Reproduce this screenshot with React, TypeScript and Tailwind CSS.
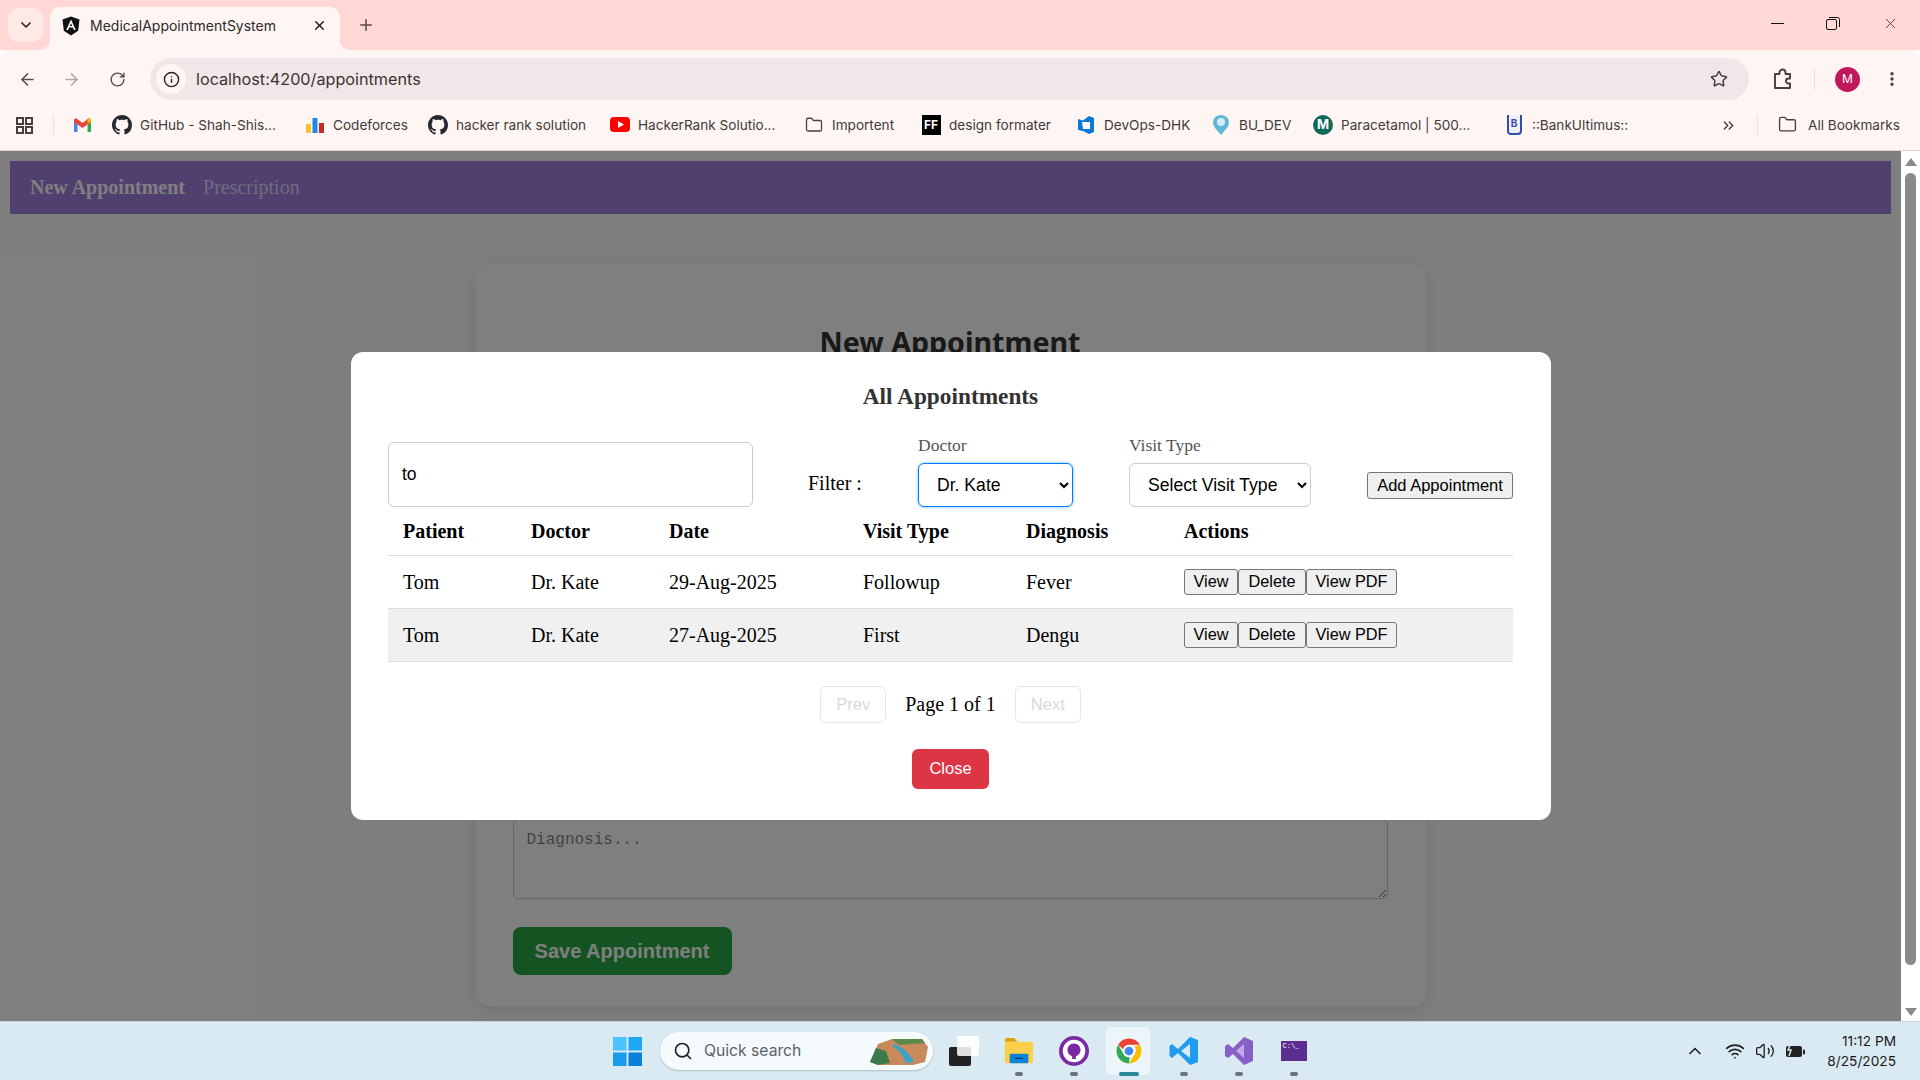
import { ArrowLeft, ArrowRight, ChevronDown, ChevronsRight, ChevronUp, Folder, Info, MoreVertical, Plus, RotateCw, Search, Star, Volume2, Wifi, X } from "lucide-react";

const serif = "font-['Liberation_Serif','Times_New_Roman',serif]";
const sans = "font-['Liberation_Sans',Arial,sans-serif]";

function GithubMark({ size = 20 }: { size?: number }) {
  return (
    <svg width={size} height={size} viewBox="0 0 16 16" fill="#24292f">
      <path d="M8 0C3.58 0 0 3.58 0 8c0 3.54 2.29 6.53 5.47 7.59.4.07.55-.17.55-.38 0-.19-.01-.82-.01-1.49-2.01.37-2.53-.49-2.69-.94-.09-.23-.48-.94-.82-1.13-.28-.15-.68-.52-.01-.53.63-.01 1.08.58 1.23.82.72 1.21 1.87.87 2.33.66.07-.52.28-.87.51-1.07-1.78-.2-3.64-.89-3.64-3.95 0-.87.31-1.59.82-2.15-.08-.2-.36-1.02.08-2.12 0 0 .67-.21 2.2.82.64-.18 1.32-.27 2-.27s1.36.09 2 .27c1.53-1.04 2.2-.82 2.2-.82.44 1.1.16 1.92.08 2.12.51.56.82 1.27.82 2.15 0 3.07-1.87 3.75-3.65 3.95.29.25.54.73.54 1.48 0 1.07-.01 1.93-.01 2.2 0 .21.15.46.55.38A8.01 8.01 0 0 0 16 8c0-4.42-3.58-8-8-8z" />
    </svg>
  );
}

function AngularMark() {
  return (
    <svg width="22" height="20" viewBox="0 0 20 20" className="shrink-0">
      <path d="M10 0.500 1.500 3.500l1.300 11.200L10 19.500l7.200-4.800 1.300-11.200z" fill="#111" />
      <path d="M10 3.500 5.200 14h1.900l1-2.400h3.800l1 2.400h1.900zm-1.200 6.600L10 7.200l1.200 2.900z" fill="#fff" />
    </svg>
  );
}

function Bookmark({ icon, label, width }: { icon: React.ReactNode; label: string; width: number }) {
  return (
    <div className="flex shrink-0 items-center gap-[8px]" style={{ width }}>
      <span className="flex w-5 shrink-0 justify-center">{icon}</span>
      <span className="whitespace-nowrap text-[13.6px] text-[#3f3a3a]">{label}</span>
    </div>
  );
}

function BrowserChrome() {
  return (
    <div className="shrink-0 font-['Inter','Liberation_Sans',sans-serif]">
      {/* tab strip */}
      <div className="flex h-[50px] items-start bg-[#ffd8d5] pl-[8px]">
        <div className="mt-[8px] flex h-[34px] w-[35px] items-center justify-center rounded-[10px] bg-[#ffe9e6]">
          <ChevronDown size={16} strokeWidth={2.5} className="text-[#2b2323]" />
        </div>
        <div className="relative ml-[7px] mt-[7px] flex h-[43px] w-[290px] items-center rounded-t-[10px] bg-[#fff6f4] pb-[6px] pl-[10px] pr-[13px]">
          <svg width="10" height="10" viewBox="0 0 10 10" className="absolute bottom-0 left-[-10px]">
            <path d="M10 0v10H0a10 10 0 0 0 10-10z" fill="#fff6f4" />
          </svg>
          <svg width="10" height="10" viewBox="0 0 10 10" className="absolute bottom-0 right-[-10px]">
            <path d="M0 0v10h10A10 10 0 0 1 0 0z" fill="#fff6f4" />
          </svg>
          <AngularMark />
          <span className="ml-[8px] flex-1 whitespace-nowrap text-[14px] text-[#2e2828]">MedicalAppointmentSystem</span>
          <X size={15} strokeWidth={2.5} className="text-[#2b2323]" />
        </div>
        <Plus size={18} strokeWidth={2} className="ml-[17px] mt-[16px] text-[#5a4a4a]" />
        <div className="ml-auto mt-[15px] flex items-center">
          <div className="flex w-[55px] justify-center"><span className="h-px w-[13px] bg-[#111]" /></div>
          <div className="flex w-[55px] justify-center">
            <svg width="14" height="13" viewBox="0 0 14 13" fill="none" stroke="#111" strokeWidth="1">
              <rect x="0.500" y="2.500" width="10" height="10" rx="1.500" />
              <path d="M3 .500h8.500a2 2 0 0 1 2 2V10" />
            </svg>
          </div>
          <div className="flex w-[60px] justify-center"><X size={17} strokeWidth={1} className="text-[#111]" /></div>
        </div>
      </div>
      {/* toolbar */}
      <div className="flex h-[58px] items-start rounded-t-[10px] bg-[#fff6f4] pl-[18px] pr-[19px] pt-[8px]">
        <div className="flex h-[42px] flex-1 items-center">
          <ArrowLeft size={19} className="shrink-0 text-[#5c4c4c]" />
          <ArrowRight size={19} className="ml-[25px] shrink-0 text-[#b3a6a6]" />
          <RotateCw size={17} className="ml-[28px] shrink-0 text-[#5c4c4c]" />
          <div className="ml-[24px] flex h-[42px] flex-1 items-center rounded-full bg-[#f2e7e8] pl-[6px] pr-[21px]">
            <span className="flex h-[30px] w-[30px] items-center justify-center rounded-full bg-[#fff6f4]">
              <Info size={17} strokeWidth={2} className="text-[#2b2323]" />
            </span>
            <span className="ml-[10px] text-[16.2px] text-[#3a3333]">localhost:4200/appointments</span>
            <Star size={18} strokeWidth={2} className="ml-auto text-[#4a3d3d]" />
          </div>
          <svg width="21" height="22" viewBox="0 0 21 22" fill="none" stroke="#4a3d3d" strokeWidth="1.900" className="ml-[23px] shrink-0">
            <path d="M3 6h4.500V4.500a3 3 0 0 1 6 0V6H18v4.500h-1.500a2.500 2.500 0 0 0 0 5H18V20H3z" strokeLinejoin="round" />
          </svg>
          <span className="ml-[21px] h-[22px] w-px shrink-0 bg-[#ffd8d5]" />
          <span className="ml-[20px] flex h-[25px] w-[25px] shrink-0 items-center justify-center rounded-full bg-[#c2185b] text-[12px] text-white">M</span>
          <MoreVertical size={18} strokeWidth={2.5} className="ml-[23px] shrink-0 text-[#4a3d3d]" />
        </div>
      </div>
      {/* bookmarks */}
      <div className="flex h-[43px] items-center border-b border-[#f0cfcb] bg-[#fff6f4] pb-[8px] pl-[15px]">
        <svg width="19" height="19" viewBox="0 0 19 19" fill="none" stroke="#4a3d3d" strokeWidth="2">
          <rect x="2" y="2" width="6" height="6" />
          <rect x="11" y="2" width="6" height="6" />
          <rect x="2" y="11" width="6" height="6" />
          <rect x="11" y="11" width="6" height="6" />
        </svg>
        <span className="ml-[19px] h-[20px] w-px bg-[#ffd8d5]" />
        <div className="ml-[20px] flex items-center">
          <svg width="17" height="14" viewBox="0 0 17 14" className="mr-[21px]">
            <path d="M0 3v11h3.500V5.500z" fill="#4285f4" />
            <path d="M13.500 14H17V3l-3.500 2.500z" fill="#34a853" />
            <path d="M0 1.500V4l8.500 6L17 4V1.500L15 0 8.500 5 2 0z" fill="#ea4335" />
            <path d="M13.500 2v4L17 3.500v-2L15 0z" fill="#fbbc04" />
          </svg>
          <Bookmark width={193} icon={<GithubMark />} label="GitHub - Shah-Shis..." />
          <Bookmark width={123} icon={
            <svg width="18" height="16" viewBox="0 0 18 16">
              <rect x="0" y="7" width="5" height="9" fill="#f4c430" />
              <rect x="6.500" y="1" width="5" height="15" fill="#1e88e5" />
              <rect x="13" y="6" width="5" height="10" fill="#c62828" />
            </svg>
          } label="Codeforces" />
          <Bookmark width={182} icon={<GithubMark />} label="hacker rank solution" />
          <Bookmark width={194} icon={
            <svg width="20" height="15" viewBox="0 0 20 15">
              <rect width="20" height="15" rx="4" fill="#f00" />
              <path d="M8 4v7l6-3.500z" fill="#fff" />
            </svg>
          } label="HackerRank Solutio..." />
          <Bookmark width={117} icon={<Folder size={18} strokeWidth={1.7} className="text-[#4a3d3d]" />} label="Importent" />
          <Bookmark width={155} icon={
            <span className="flex h-[20px] w-[19px] items-center justify-center bg-black text-[12px] font-bold leading-none text-white">FF</span>
          } label="design formater" />
          <Bookmark width={135} icon={
            <svg width="20" height="20" viewBox="0 0 20 20">
              <path d="M13 1 7 5.500 2 4v11l5 1 6 3 5-2V3z" fill="#0a78d7" />
              <path d="M6 7h8v7H7z" fill="#fff6f4" />
            </svg>
          } label="DevOps-DHK" />
          <Bookmark width={102} icon={
            <svg width="16" height="20" viewBox="0 0 16 20">
              <path d="M8 20C4 15 0 12 0 7a8 7 0 0 1 16 0c0 5-4 8-8 13z" fill="#5fb6d6" />
              <circle cx="8" cy="7" r="4" fill="#d4eef7" />
            </svg>
          } label="BU_DEV" />
          <Bookmark width={191} icon={
            <span className="flex h-[20px] w-[20px] items-center justify-center rounded-full bg-[#0e6b5a] text-[13px] font-bold leading-none text-white">M</span>
          } label="Paracetamol | 500..." />
          <Bookmark width={216} icon={
            <span className="flex h-[20px] w-[15px] items-center justify-center rounded-b-[4px] border-x-2 border-b-2 border-[#3550a8] bg-[#eef1fb] text-[10px] font-bold text-[#3550a8]">B</span>
          } label="::BankUltimus::" />
        </div>
        <ChevronsRight size={17} strokeWidth={2} className="text-[#4a3d3d]" />
        <span className="ml-[20px] h-[20px] w-px bg-[#ffd8d5]" />
        <div className="ml-[20px] flex items-center gap-[11px]">
          <Folder size={19} strokeWidth={1.7} className="text-[#4a3d3d]" />
          <span className="whitespace-nowrap text-[13.6px] text-[#3f3a3a]">All Bookmarks</span>
        </div>
      </div>
    </div>
  );
}

function ActionButtons() {
  return (
    <div className={`flex text-[16.3px] ${sans}`}>
      <button type="button" className="h-[26px] w-[54px] rounded-[3px] border border-[#767676] bg-[#efefef] leading-none text-black">View</button>
      <button type="button" className="h-[26px] w-[68px] rounded-[3px] border border-[#767676] bg-[#efefef] leading-none text-black">Delete</button>
      <button type="button" className="h-[26px] w-[91px] rounded-[3px] border border-[#767676] bg-[#efefef] leading-none text-black">View PDF</button>
    </div>
  );
}

function AppointmentRow({ date, visit, diagnosis, shaded }: { date: string; visit: string; diagnosis: string; shaded?: boolean }) {
  return (
    <tr className={`h-[53px] border-b border-[#dddddd] text-[20px] ${shaded ? "bg-[#f0f0f0]" : ""}`}>
      <td className="px-[15px]">Tom</td>
      <td className="px-[15px]">Dr. Kate</td>
      <td className="px-[15px]">{date}</td>
      <td className="px-[15px]">{visit}</td>
      <td className="px-[15px]">{diagnosis}</td>
      <td className="px-[15px]"><ActionButtons /></td>
    </tr>
  );
}

function AppointmentsModal() {
  return (
    <div className={`absolute left-[351px] top-[201px] h-[468px] w-[1200px] rounded-[12px] bg-white pl-[37px] pr-[38px] pt-[31px] ${serif}`}>
      <h2 className="text-center text-[23.3px] font-bold leading-[26px] text-[#333333]">All Appointments</h2>
      <div className="mt-[32px] flex h-[66px] items-end">
        <input
          readOnly
          value="to"
          className={`h-[65px] w-[365px] rounded-[6px] border border-[#cccccc] px-[13px] text-[17.5px] text-black outline-none ${sans}`}
        />
        <span className="mb-[9px] ml-[55px] w-[110px] text-[20px] text-black">Filter :</span>
        <div className="flex flex-col">
          <label className="mb-[9px] text-[17.5px] leading-[18px] text-[#555555]">Doctor</label>
          <select
            value="Dr. Kate"
            onChange={() => undefined}
            className={`h-[44px] w-[155px] rounded-[6px] border border-[#007bff] pl-[14px] text-[17.6px] text-black shadow-[0_0_3px_#66afff] outline-none ${sans}`}
          >
            <option>Dr. Kate</option>
          </select>
        </div>
        <div className="ml-[56px] flex flex-col">
          <label className="mb-[9px] text-[17.5px] leading-[18px] text-[#555555]">Visit Type</label>
          <select
            value="Select Visit Type"
            onChange={() => undefined}
            className={`h-[44px] w-[182px] rounded-[6px] border border-[#cccccc] pl-[14px] text-[17.6px] text-black outline-none ${sans}`}
          >
            <option>Select Visit Type</option>
          </select>
        </div>
        <button
          type="button"
          className={`mb-[8px] ml-auto h-[27px] w-[146px] rounded-[3px] border border-[#767676] bg-[#efefef] text-[16.5px] leading-none text-black ${sans}`}
        >
          Add Appointment
        </button>
      </div>
      <table className="w-[1125px] table-fixed border-collapse text-left text-black">
        <colgroup>
          <col className="w-[128px]" />
          <col className="w-[138px]" />
          <col className="w-[194px]" />
          <col className="w-[163px]" />
          <col className="w-[158px]" />
          <col />
        </colgroup>
        <thead>
          <tr className="h-[48px] border-b border-[#dddddd] text-[20px]">
            {["Patient", "Doctor", "Date", "Visit Type", "Diagnosis", "Actions"].map((h) => (
              <th key={h} className="px-[15px] font-bold">{h}</th>
            ))}
          </tr>
        </thead>
        <tbody>
          <AppointmentRow date="29-Aug-2025" visit="Followup" diagnosis="Fever" />
          <AppointmentRow date="27-Aug-2025" visit="First" diagnosis="Dengu" shaded />
        </tbody>
      </table>
      <div className={`mt-[24px] flex items-center justify-center ${sans}`}>
        <button type="button" className="h-[37px] w-[66px] rounded-[6px] border border-[#e6e6e6] bg-white text-[16.5px] text-[#d9d9d9]">Prev</button>
        <span className={`mx-[19px] text-[20px] text-black ${serif}`}>Page 1 of 1</span>
        <button type="button" className="h-[37px] w-[66px] rounded-[6px] border border-[#e6e6e6] bg-white text-[16.5px] text-[#d9d9d9]">Next</button>
      </div>
      <div className={`mt-[26px] flex justify-center ${sans}`}>
        <button type="button" className="h-[40px] w-[77px] rounded-[6px] bg-[#dc3545] text-[16.5px] text-white">Close</button>
      </div>
    </div>
  );
}

function AppPage() {
  return (
    <div className="relative flex min-w-0 flex-1 flex-col bg-[#fdfdfd] px-[10px] pt-[10px]">
      <nav className={`flex h-[53px] shrink-0 items-center gap-[18px] bg-[#a080e0] px-[20px] pb-[1px] text-[20px] font-bold ${serif}`}>
        <span className="text-white">New Appointment</span>
        <span className="font-normal text-white/70">Prescription</span>
      </nav>
      <div className="mx-auto mt-[50px] flex h-[742px] w-[950px] flex-col rounded-[14px] bg-white pl-[37px] pr-[38px] shadow-[0_4px_20px_rgba(0,0,0,0.1)]">
        <h1 className="mt-[60px] text-center font-['Noto_Sans',sans-serif] text-[28.6px] font-bold leading-[36px] text-[#333333]">New Appointment</h1>
        <textarea
          readOnly
          placeholder="Diagnosis..."
          className="mt-[459px] h-[80px] w-full rounded-[6px] border border-[#cccccc] px-[13px] py-[8px] font-['Liberation_Mono',monospace] text-[16px]"
        />
        <button type="button" className={`mt-[28px] h-[48px] w-[219px] rounded-[8px] bg-[#28a745] text-[20px] font-bold text-white ${sans}`}>
          Save Appointment
        </button>
      </div>
      <div className="absolute inset-0 bg-black/50" />
      <AppointmentsModal />
    </div>
  );
}

function TaskIcon({ children, dot = true }: { children: React.ReactNode; dot?: boolean }) {
  return (
    <div className="relative flex h-[48px] w-[55px] shrink-0 items-center justify-center">
      {children}
      {dot && <span className="absolute bottom-[-1px] h-[4px] w-[8px] rounded-full bg-[#6b7478]" />}
    </div>
  );
}

function Taskbar() {
  return (
    <div className="relative flex h-[59px] shrink-0 items-center border-t border-[#c8d4da] bg-[#daeaf2] pl-[613px] font-['Inter','Liberation_Sans',sans-serif]">
      <svg width="29" height="29" viewBox="0 0 30 30" className="mr-[18px] shrink-0">
        <rect x="0" y="0" width="14" height="14" fill="#4cc2ff" />
        <rect x="16" y="0" width="14" height="14" fill="#1ea7f5" />
        <rect x="0" y="16" width="14" height="14" fill="#1a9bec" />
        <rect x="16" y="16" width="14" height="14" fill="#0a7fdc" />
      </svg>
      <div className="flex h-[38px] w-[273px] shrink-0 items-center rounded-full bg-[#f5fafc] pl-[13px] shadow-[0_1px_2px_rgba(0,0,0,0.2)]">
        <Search size={20} strokeWidth={2} className="text-[#222]" />
        <span className="ml-[11px] text-[15.7px] text-[#5c6266]">Quick search</span>
        <svg width="62" height="30" viewBox="0 0 62 30" className="ml-auto mr-[3px]">
          <path d="M2 26 10 8 24 3h30l6 8-3 15-12 3H10z" fill="#c98a5b" />
          <path d="M2 26 8 12l10 3 4 12-12 2z" fill="#3c7a4e" />
          <path d="M24 10c6 3 10 8 14 17l8-1c-4-8-10-14-20-18z" fill="#3aa3c9" />
          <path d="M24 3h30l3 4-26 2z" fill="#5c8a4a" />
        </svg>
      </div>
      <div className="ml-[3px] flex">
        <TaskIcon dot={false}>
          <svg width="30" height="30" viewBox="0 0 30 30">
            <rect x="0" y="11" width="22" height="19" rx="2" fill="#222" />
            <rect x="8" y="0" width="22" height="20" rx="2" fill="#fff" fillOpacity="0.85" />
          </svg>
        </TaskIcon>
        <TaskIcon>
          <svg width="30" height="30" viewBox="0 0 32 30">
            <path d="M1 3a2 2 0 0 1 2-2h8l3 4H1z" fill="#dfa106" />
            <rect x="1" y="5" width="30" height="23" rx="1.500" fill="#fccf4a" />
            <rect x="6" y="18" width="20" height="10" rx="1.500" fill="#0a84d6" />
            <rect x="12" y="22" width="8" height="1.500" fill="#0b3e73" />
          </svg>
        </TaskIcon>
        <TaskIcon>
          <svg width="30" height="30" viewBox="0 0 32 32">
            <circle cx="16" cy="16" r="14" fill="#fff" stroke="#7b2aa5" strokeWidth="4" />
            <path d="M16 8c-4 0-7 3-7 7 0 3 2 5.500 5 6.500v3h4v-3c3-1 5-3.500 5-6.500 0-4-3-7-7-7z" fill="#7b2aa5" />
          </svg>
        </TaskIcon>
        <div className="relative flex h-[48px] w-[55px] shrink-0 items-center justify-center">
          <span className="absolute inset-y-0 left-[5px] w-[44px] rounded-[5px] bg-[#ecf5f9]" />
          <svg width="30" height="30" viewBox="0 0 48 48" className="relative">
            <path d="M24 4a20 20 0 0 1 17.300 10H24a10 10 0 0 0-9.500 7L6.700 14A20 20 0 0 1 24 4z" fill="#ea4335" />
            <path d="M41.300 14A20 20 0 0 1 24 44l8.700-15A10 10 0 0 0 33 17z" fill="#fbbc04" />
            <path d="M6.700 14 15.300 29a10 10 0 0 0 9.700 5L24 44A20 20 0 0 1 6.700 14z" fill="#34a853" />
            <circle cx="24" cy="24" r="9" fill="#fff" />
            <circle cx="24" cy="24" r="7" fill="#4285f4" />
          </svg>
          <span className="absolute bottom-[-1px] h-[4px] w-[20px] rounded-full bg-[#2a8a9a]" />
        </div>
        <TaskIcon>
          <svg width="30" height="30" viewBox="0 0 30 30">
            <path d="M21 1 9 13 3 8 0.500 10v10L3 22l6-5 12 12 8-3V4z" fill="#1f9cf0" />
            <path d="M21 8v14l-9-7z" fill="#daeaf2" />
          </svg>
        </TaskIcon>
        <TaskIcon>
          <svg width="30" height="30" viewBox="0 0 30 30">
            <path d="M20 1 9 12 4 8 1 10v10l3 2 5-4 11 11 9-4V5z" fill="#8661c5" />
            <path d="M20 8v14l-8-7z" fill="#c9a7f0" />
          </svg>
        </TaskIcon>
        <TaskIcon>
          <span className="flex h-[20px] w-[26px] items-start bg-[#5c2d91] pl-[2px] font-['Liberation_Mono',monospace] text-[7px] leading-[10px] text-white">C:\_</span>
        </TaskIcon>
      </div>
      <div className="absolute right-[24px] top-0 flex h-full items-center">
        <ChevronUp size={20} strokeWidth={2} className="text-[#222]" />
        <Wifi size={20} strokeWidth={2} className="ml-[20px] text-[#222]" />
        <Volume2 size={20} strokeWidth={1.6} className="ml-[10px] text-[#222]" />
        <svg width="20" height="16" viewBox="0 0 20 16" className="ml-[10px]">
          <rect x="1" y="3" width="16" height="11" rx="2" fill="#222" />
          <rect x="18" y="6.500" width="2" height="5" rx="1" fill="#222" />
          <path d="M6 0 3 7h3l-2 6" stroke="#daeaf2" strokeWidth="1.500" fill="none" />
        </svg>
        <div className="ml-[22px] flex flex-col items-end text-[13.7px] leading-[20px] text-[#1a1a1a]">
          <span>11:12 PM</span>
          <span>8/25/2025</span>
        </div>
      </div>
    </div>
  );
}

function Scrollbar() {
  return (
    <div className="flex w-[19px] shrink-0 flex-col items-center bg-white">
      <div className="mt-[7px] h-0 w-0 border-x-[6px] border-b-[8px] border-x-transparent border-b-[#8a8a8a]" />
      <div className="mt-[7px] h-[792px] w-[11px] rounded-full bg-[#8a8a8a]" />
      <div className="mb-[5px] mt-auto h-0 w-0 border-x-[6px] border-t-[8px] border-x-transparent border-t-[#8a8a8a]" />
    </div>
  );
}

export default function App() {
  return (
    <div className="flex h-[1080px] w-[1920px] flex-col overflow-hidden">
      <BrowserChrome />
      <div className="flex min-h-0 flex-1">
        <AppPage />
        <Scrollbar />
      </div>
      <Taskbar />
    </div>
  );
}
